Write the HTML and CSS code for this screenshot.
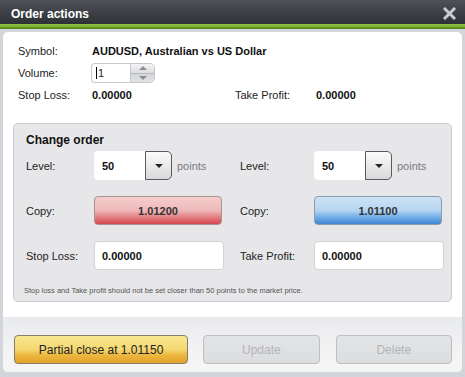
FILE: index.html
```html
<!DOCTYPE html>
<html lang="en">
<head>
<meta charset="UTF-8">
<title>Order actions</title>
<link rel="stylesheet" href="styles.css">
</head>
<body>

<div id="dialog">
    <div id="titlebar">
        <span class="title">Order actions</span>
        <svg class="close" width="13" height="13" viewBox="0 0 13 13">
            <path d="M2 2 L11 11 M11 2 L2 11" stroke="#c9cbce" stroke-width="3" stroke-linecap="square"/>
        </svg>
    </div>
    <div class="title-line"></div>

    <div id="panel">
        <div class="info">
            <span class="label">Symbol:</span>
            <span class="value wide">AUDUSD, Australian vs US Dollar</span>

            <span class="label">Volume:</span>
            <div class="spin wide">
                <div class="spin-input"><span class="caret"></span>1</div>
                <div class="spin-buttons">
                    <div class="spin-up"><span class="tri-up"></span></div>
                    <div class="spin-down"><span class="tri-down"></span></div>
                </div>
            </div>

            <span class="label">Stop Loss:</span>
            <span class="value">0.00000</span>
            <span class="label">Take Profit:</span>
            <span class="value">0.00000</span>
        </div>

        <div id="changeOrder">
            <div class="box-title">Change order</div>
            <div class="grid">
                <span class="label">Level:</span>
                <div class="level">
                    <div class="select">
                        <div class="select-value">50</div>
                        <div class="select-btn"><span class="tri-down dark"></span></div>
                    </div>
                    <span class="unit">points</span>
                </div>
                <span class="label">Level:</span>
                <div class="level">
                    <div class="select">
                        <div class="select-value">50</div>
                        <div class="select-btn"><span class="tri-down dark"></span></div>
                    </div>
                    <span class="unit">points</span>
                </div>

                <span class="label">Copy:</span>
                <div><button class="copy sell">1.01200</button></div>
                <span class="label">Copy:</span>
                <div><button class="copy buy">1.01100</button></div>

                <span class="label">Stop Loss:</span>
                <div><div class="field">0.00000</div></div>
                <span class="label">Take Profit:</span>
                <div><div class="field">0.00000</div></div>
            </div>
            <p class="note">Stop loss and Take profit should not be set closer than 50 points to the market price.</p>
        </div>

        <div id="footer">
            <button class="button partial">Partial close at 1.01150</button>
            <button class="button off" disabled>Update</button>
            <button class="button off" disabled>Delete</button>
        </div>
    </div>
</div>

</body>
</html>
```

FILE: styles.css
```css
body {
    margin: 0;
    background-color: #d2d5d9;
    font-family: 'Liberation Sans', Arial, sans-serif;
    font-size: 11px;
    color: #222;
}

#dialog {
    width: 465px;
    height: 377px;
    overflow: hidden;
}

#titlebar {
    height: 24px;
    padding: 0 9px 0 11px;
    display: flex;
    align-items: center;
    justify-content: space-between;
    background: linear-gradient(#4d5158, #2e3136);
    color: #fff;
}

.title {
    font-size: 12px;
    font-weight: bold;
    padding-top: 3px;
}

.close {
    margin-top: 3px;
}

.title-line {
    height: 5px;
    background: linear-gradient(#8ec640, #79b02e 50%, #4e7c18);
}

#panel {
    margin: 3px 3px 0;
    height: 340px;
    background-color: #fff;
    border-radius: 5px;
    display: flex;
    flex-direction: column;
}

/* top info */
.info {
    display: grid;
    grid-template-columns: 74px 143px 81px auto;
    grid-auto-rows: 22px;
    align-items: center;
    padding: 8px 15px 0;
}

.info .wide {
    grid-column: 2 / 5;
}

.value {
    font-weight: bold;
    color: #111;
}

.spin {
    display: flex;
    width: 64px;
    height: 20px;
    margin-left: -1px;
}

.spin-input {
    border: 1px solid #c9c9c9;
    border-right: none;
    border-radius: 4px 0 0 4px;
    display: flex;
    align-items: center;
    padding-left: 4px;
    font-size: 11px;
    box-sizing: border-box;
    width: 39px;
}

.caret {
    width: 1px;
    height: 12px;
    background-color: #000;
    margin-right: 1px;
}

.spin-buttons {
    flex: 1;
    display: flex;
    flex-direction: column;
    border: 1px solid #c4c6c9;
    border-radius: 0 5px 5px 0;
    overflow: hidden;
}

.spin-up,
.spin-down {
    flex: 1;
    display: flex;
    align-items: center;
    justify-content: center;
}

.spin-up {
    background: linear-gradient(#f4f4f5, #dcdde0);
    border-bottom: 1px solid #b9bbbe;
}

.spin-down {
    background: linear-gradient(#d2d4d7, #e3e4e6);
}

.tri-up {
    border-left: 4px solid transparent;
    border-right: 4px solid transparent;
    border-bottom: 4px solid #8b8e92;
}

.tri-down {
    border-left: 4px solid transparent;
    border-right: 4px solid transparent;
    border-top: 4px solid #8b8e92;
}

.tri-down.dark {
    border-top-color: #222;
}

/* change order box */
#changeOrder {
    margin: 17px 10px 0;
    padding: 9px 12px 5px;
    background-color: #e7e7e9;
    border: 1px solid #cbcbcf;
    border-radius: 5px;
}

.box-title {
    font-size: 12px;
    font-weight: bold;
    color: #111;
    line-height: 14px;
}

.grid {
    display: grid;
    grid-template-columns: 68px 146px 74px auto;
    grid-auto-rows: 29px;
    row-gap: 16px;
    align-items: center;
    margin-top: 4px;
}

.level {
    display: flex;
    align-items: center;
}

.select {
    display: flex;
    width: 78px;
    height: 29px;
}

.select-value {
    width: 51px;
    background-color: #fff;
    border-radius: 4px 0 0 4px;
    display: flex;
    align-items: center;
    padding-left: 8px;
    box-sizing: border-box;
    font-weight: bold;
    color: #111;
}

.select-btn {
    flex: 1;
    display: flex;
    align-items: center;
    justify-content: center;
    border: 1px solid #59595c;
    border-radius: 0 5px 5px 0;
    background: linear-gradient(#fbfbfb, #d9d9db);
}

.unit {
    margin-left: 5px;
    color: #7a7a86;
}

.copy {
    width: 128px;
    height: 29px;
    border-radius: 4px;
    font-family: inherit;
    font-size: 11px;
    font-weight: bold;
    color: #333;
    padding: 0;
}

.sell {
    border: 1px solid #a99393;
    background: linear-gradient(#f5cdcd, #efb8b8 50%, #e58a8c 70%, #d4474f);
}

.buy {
    border: 1px solid #8c9db0;
    background: linear-gradient(#cde3f6, #b6d5f1 50%, #7db4ea 70%, #3f86d6);
}

.field {
    width: 130px;
    height: 29px;
    box-sizing: border-box;
    background-color: #fff;
    border: 1px solid #d2d2d4;
    border-radius: 4px;
    display: flex;
    align-items: center;
    padding-left: 7px;
    font-weight: bold;
    color: #111;
}

.note {
    margin: 16px 0 0 -2px;
    font-size: 7.5px;
    line-height: 10px;
    color: #555;
}

/* footer */
#footer {
    margin-top: 15px;
    flex: 1;
    display: flex;
    align-items: flex-start;
    gap: 15px;
    padding: 18px 10px 0 11px;
    background: linear-gradient(#e9eaec, #f3f3f4 60%, #f6f6f7);
    border-radius: 0 0 5px 5px;
}

.button {
    height: 29px;
    border-radius: 4px;
    font-family: inherit;
    font-size: 12px;
    padding: 0;
}

.partial {
    width: 175px;
    border: 1px solid #857d6c;
    color: #222;
    background: linear-gradient(#f8e68e, #f4d872 50%, #ecb840 70%, #e4a12b);
}

.off {
    width: 117px;
    border: 1px solid #bdbec1;
    color: #b3b4b7;
    background: linear-gradient(#e3e4e6, #dcdddf);
}

.off + .off {
    margin-left: 1px;
}
```
